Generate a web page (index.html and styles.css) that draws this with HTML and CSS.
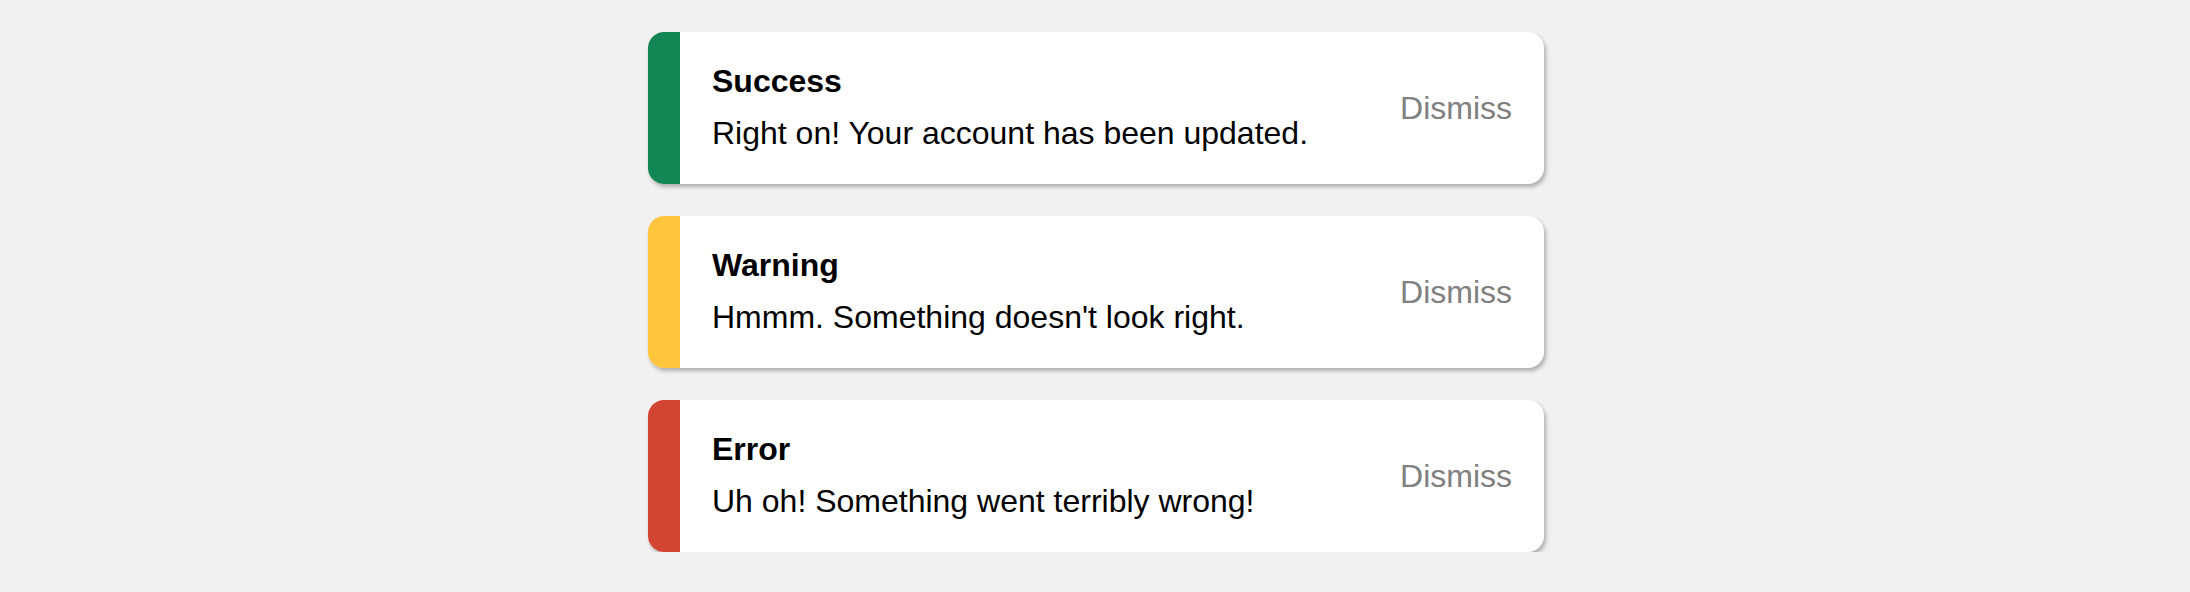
FILE: index.html
```html
<!DOCTYPE html>
<html lang="en">
<head>
<meta charset="utf-8">
<title>Alerts</title>
<link rel="stylesheet" href="styles.css">
</head>
<body>
<main class="stack">
  <div class="alert alert-success">
    <div class="alert-bar"></div>
    <div class="alert-body">
      <div class="alert-text">
        <div class="alert-title">Success</div>
        <div class="alert-message">Right on! Your account has been updated.</div>
      </div>
      <button class="alert-dismiss">Dismiss</button>
    </div>
  </div>
  <div class="alert alert-warning">
    <div class="alert-bar"></div>
    <div class="alert-body">
      <div class="alert-text">
        <div class="alert-title">Warning</div>
        <div class="alert-message">Hmmm. Something doesn't look right.</div>
      </div>
      <button class="alert-dismiss">Dismiss</button>
    </div>
  </div>
  <div class="alert alert-error">
    <div class="alert-bar"></div>
    <div class="alert-body">
      <div class="alert-text">
        <div class="alert-title">Error</div>
        <div class="alert-message">Uh oh! Something went terribly wrong!</div>
      </div>
      <button class="alert-dismiss">Dismiss</button>
    </div>
  </div>
</main>
</body>
</html>
```

FILE: styles.css
```css
* { box-sizing: border-box; }

html, body {
  margin: 0;
  background: #f1f1f1;
  font-family: "Liberation Sans", Arial, Helvetica, sans-serif;
}

.stack {
  display: flex;
  flex-direction: column;
  align-items: center;
  gap: 32px;
  padding-top: 32px;
  padding-left: 2px;
}

.alert {
  width: 896px;
  height: 152px;
  display: flex;
  background: #ffffff;
  border-radius: 16px;
  overflow: hidden;
  box-shadow: 2px 3px 4px rgba(0, 0, 0, 0.28);
}

.alert-bar {
  width: 32px;
  flex: none;
}

.alert-success .alert-bar { background: #138656; }
.alert-warning .alert-bar { background: #ffc53d; }
.alert-error .alert-bar { background: #d14532; }

.alert-body {
  flex: 1;
  display: flex;
  align-items: center;
  justify-content: space-between;
  padding: 31px 32px 33px 32px;
}

.alert-text {
  display: flex;
  flex-direction: column;
  gap: 16px;
}

.alert-title {
  font-size: 32px;
  line-height: 36px;
  font-weight: bold;
  color: #000;
}

.alert-message {
  font-size: 32px;
  line-height: 36px;
  color: #000;
}

.alert-dismiss {
  font-family: inherit;
  font-size: 32px;
  line-height: 36px;
  color: #808080;
  background: none;
  border: 0;
  padding: 0;
  margin-top: 1px;
  cursor: pointer;
}
```
